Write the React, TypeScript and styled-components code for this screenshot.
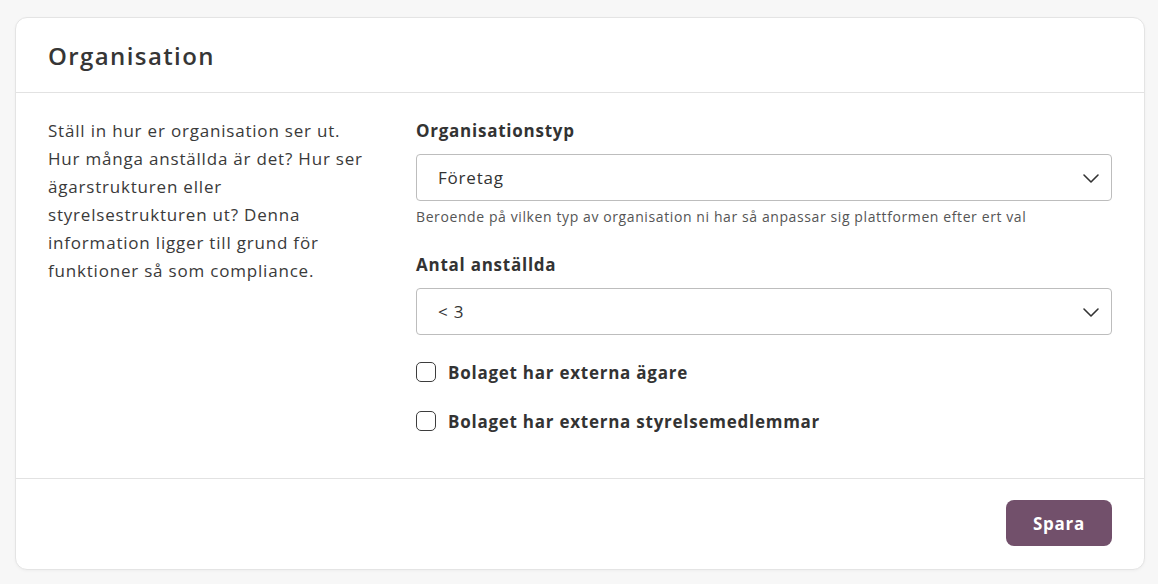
import React, { useState } from 'react'
import styled, { createGlobalStyle } from 'styled-components'

const GlobalStyle = createGlobalStyle`
    body {
        margin: 0;
        background: #f7f7f7;
        font-family: 'Open Sans', Lato, sans-serif;
        color: #333;
    }
`

const Page = styled.div`
    padding: 17px 13px 15px 15px;
`

const Card = styled.section`
    background: #fff;
    border: 1px solid #e4e4e4;
    border-radius: 12px;
    box-shadow: 0 1px 3px rgba(0, 0, 0, 0.04);
`

const Header = styled.header`
    height: 74px;
    display: flex;
    align-items: center;
    padding: 0 32px;
    border-bottom: 1px solid #e2e2e2;
`

const Title = styled.h2`
    margin: 0;
    font-size: 24px;
    font-weight: 600;
    letter-spacing: 1.4px;
    color: #363636;
`

const Body = styled.div`
    display: grid;
    grid-template-columns: 336px 1fr;
    column-gap: 32px;
    padding: 24px 32px 43px;
    border-bottom: 1px solid #e2e2e2;
`

const Intro = styled.p`
    margin: 0;
    max-width: 324px;
    font-size: 17px;
    line-height: 28px;
    letter-spacing: 0.8px;
    color: #3a3a3a;
`

const Fields = styled.div`
    display: flex;
    flex-direction: column;
`

const Field = styled.div<{ $gap?: number }>`
    display: flex;
    flex-direction: column;
    margin-bottom: ${p => p.$gap ?? 0}px;
`

const Label = styled.label`
    font-size: 17px;
    font-weight: 700;
    line-height: 28px;
    letter-spacing: 0.75px;
    color: #333;
    margin-bottom: 9px;
`

const SelectWrap = styled.div`
    position: relative;
`

const Select = styled.select`
    appearance: none;
    width: 100%;
    height: 47px;
    padding: 0 48px 0 21px;
    border: 1px solid #bdbdbd;
    border-radius: 4px;
    background: #fff;
    font-family: inherit;
    font-size: 17px;
    letter-spacing: 0.8px;
    color: #333;
    outline: none;
`

const Chevron = styled.svg`
    position: absolute;
    right: 9px;
    top: 50%;
    transform: translateY(-50%);
    pointer-events: none;
`

const Help = styled.span`
    font-size: 14px;
    line-height: 18px;
    letter-spacing: 0.6px;
    color: #555;
    margin-top: 7px;
`

const CheckRow = styled.label`
    display: flex;
    align-items: center;
    gap: 12px;
    height: 28px;
    font-size: 17px;
    font-weight: 700;
    letter-spacing: 0.75px;
    color: #333;
    cursor: pointer;
`

const Box = styled.span<{ $on: boolean }>`
    width: 20px;
    height: 20px;
    box-sizing: border-box;
    border: 1.5px solid #3d3d3d;
    border-radius: 5px;
    background: ${p => (p.$on ? '#72506b' : '#fff')};
    border-color: ${p => (p.$on ? '#72506b' : '#3d3d3d')};
`

const Checks = styled.div`
    display: flex;
    flex-direction: column;
    gap: 21px;
    margin-top: 23px;
`

const Footer = styled.footer`
    display: flex;
    justify-content: flex-end;
    padding: 21px 32px 23px;
`

const Button = styled.button`
    width: 106px;
    height: 46px;
    border: none;
    border-radius: 8px;
    background: #72506b;
    color: #fff;
    font-family: inherit;
    font-size: 17px;
    font-weight: 700;
    letter-spacing: 0.75px;
    cursor: pointer;
`

const ChevronDown = () => (
    <Chevron width='24' height='24' viewBox='0 0 24 24' fill='none' stroke='#333' strokeWidth='1.6' strokeLinecap='round' strokeLinejoin='round'>
        <path d='M5 9l7 7 7-7' />
    </Chevron>
)

const Check = ({ label }: { label: string }) => {
    const [on, setOn] = useState(false)
    return (
        <CheckRow onClick={() => setOn(v => !v)}>
            <Box $on={on} />
            {label}
        </CheckRow>
    )
}

const App = () => (
    <Page>
        <GlobalStyle />
        <Card>
            <Header>
                <Title>Organisation</Title>
            </Header>
            <Body>
                <Intro>
                    Ställ in hur er organisation ser ut. Hur många anställda är det? Hur ser ägarstrukturen eller
                    styrelsestrukturen ut? Denna information ligger till grund för funktioner så som compliance.
                </Intro>
                <Fields>
                    <Field $gap={25}>
                        <Label>Organisationstyp</Label>
                        <SelectWrap>
                            <Select defaultValue='foretag'>
                                <option value='foretag'>Företag</option>
                                <option value='forening'>Förening</option>
                            </Select>
                            <ChevronDown />
                        </SelectWrap>
                        <Help>Beroende på vilken typ av organisation ni har så anpassar sig plattformen efter ert val</Help>
                    </Field>
                    <Field>
                        <Label>Antal anställda</Label>
                        <SelectWrap>
                            <Select defaultValue='lt3'>
                                <option value='lt3'>&lt; 3</option>
                                <option value='3-10'>3 - 10</option>
                            </Select>
                            <ChevronDown />
                        </SelectWrap>
                    </Field>
                    <Checks>
                        <Check label='Bolaget har externa ägare' />
                        <Check label='Bolaget har externa styrelsemedlemmar' />
                    </Checks>
                </Fields>
            </Body>
            <Footer>
                <Button>Spara</Button>
            </Footer>
        </Card>
    </Page>
)

export default App
